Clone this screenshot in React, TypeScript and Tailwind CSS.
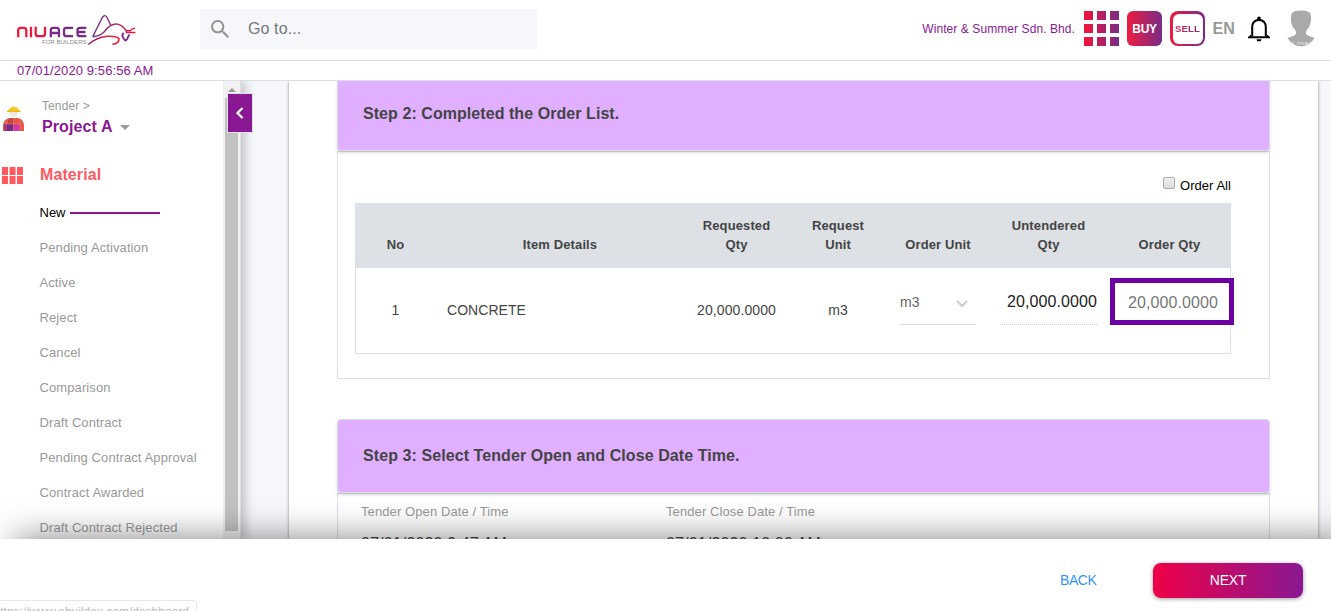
import type { ReactNode } from "react";

const menuItems = [
  "Pending Activation",
  "Active",
  "Reject",
  "Cancel",
  "Comparison",
  "Draft Contract",
  "Pending Contract Approval",
  "Contract Awarded",
  "Draft Contract Rejected",
];

function Logo() {
  return (
    <svg width="122" height="34" viewBox="0 0 122 34" fill="none" className="shrink-0">
      <defs>
        <linearGradient id="tail" x1="72" y1="0" x2="104" y2="0" gradientUnits="userSpaceOnUse">
          <stop stopColor="#7b2a8b" />
          <stop offset=".6" stopColor="#f01a3e" />
        </linearGradient>
        <linearGradient id="back" x1="77" y1="0" x2="120" y2="0" gradientUnits="userSpaceOnUse">
          <stop stopColor="#6d2c91" />
          <stop offset=".5" stopColor="#a82464" />
          <stop offset="1" stopColor="#f01a3e" />
        </linearGradient>
      </defs>
      <g strokeWidth="2.3">
        <path stroke="#ed1a3d" d="M2.200 24.300V17.300Q2.200 14.800 4.700 14.800H7.800Q10.300 14.800 10.300 17.300V24.300M15 13.700V24.300M19.700 13.700V20.700Q19.700 23.200 22.200 23.200H26.500Q29 23.200 29 20.700V13.700" />
        <path stroke="#7b2a8b" d="M34.800 24.300V17.300Q34.800 14.800 37.300 14.800H40.500Q43 14.800 43 17.300V24.300M34.800 20H43M57 14.800H50.500Q48 14.800 48 17.300V20.700Q48 23.200 50.500 23.200H57M70.300 14.800H64Q61.500 14.800 61.500 17.300V20.700Q61.500 23.200 64 23.200H70.300M61.500 19H69.500" />
      </g>
      <text x="26" y="31.300" fill="#8c8c8c" fontFamily="Liberation Sans" fontSize="6" textLength="44.500" lengthAdjust="spacingAndGlyphs">FOR BUILDERS</text>
      <path stroke="url(#back)" strokeWidth="1.400" strokeLinejoin="round" d="M76.700 23.700L86.300 4.500Q88.900 .8 91 4.500L95 12.700M76.700 23.700Q84.500 23 88.500 18.500Q94 11 100 11Q105.500 11 109.700 17.200L114 17.700Q116.500 15.300 119 15.300M110 17.500L110.500 19.500H119.500" />
      <path stroke="url(#tail)" strokeWidth="1.500" d="M72.300 31.500Q80 24.500 91 23.200Q101 22.800 103 25.500Q103.500 30.500 96.300 31.300" />
      <path stroke="#7b2a8b" strokeWidth="1.800" d="M107.500 19.800Q105.500 22 107 24.500L109.200 27.500Q111.500 27 111.700 24.500L113.500 21.500" />
    </svg>
  );
}

function Worker() {
  return (
    <svg width="22" height="26" viewBox="0 0 22 26">
      <circle cx="10.500" cy="6" r="4.800" fill="#eee8df" />
      <path fill="#f4c81f" d="M4 6L6 3Q8 1 10 1L10.500 0L11.500 1Q14 1 15.500 3L17.500 6Z" />
      <path fill="#e8b615" d="M4 4.800H17.500V6H4Z" />
      <path fill="#e65747" d="M0 25V19Q1 12 8 12H14Q20 12 21 19V25Z" />
      <path fill="#7b2a8b" d="M1.500 18H10.500V25H1.500Z" />
      <path fill="#cf3aa0" d="M10.500 18H17V25H10.500Z" />
      <path fill="#c9443f" d="M7 12H11V18H5V14Z" />
      <path stroke="#f08a72" strokeWidth=".5" d="M3 15V25M10.500 12V25M17 14V25M3 18H18" />
    </svg>
  );
}

function Avatar() {
  return (
    <svg width="32" height="37" viewBox="0 0 32 37">
      <defs>
        <clipPath id="avatarClip"><ellipse cx="16" cy="18" rx="16" ry="18.300" /></clipPath>
      </defs>
      <g clipPath="url(#avatarClip)">
        <path fill="#a9a9a9" d="M7 2.500Q9 .5 16 .5T25 2.500Q27 8 25.500 13Q25 17 22 19.500Q20.500 22 21 24Q24 27 32 28V37H0V28Q8 27 11 24Q11.500 22 10 19.500Q7 17 6.500 13Q5 8 7 2.500Z" />
        <text x="16" y="34.500" textAnchor="middle" fontFamily="Liberation Sans" fontSize="6" letterSpacing=".4" fill="#eee">No Image</text>
      </g>
    </svg>
  );
}

function StepHeader({ children, size }: { children: ReactNode; size: string }) {
  return (
    <div className={`relative box-border rounded-[4px] border border-[#dcdce4] bg-[#e0afff] pl-[25px] text-[16px] font-bold text-[#444] shadow-[0_2px_3px_rgba(0,0,0,0.15)] ${size}`}>
      {children}
    </div>
  );
}

export default function App() {
  return (
    <div className="flex h-[611px] w-[1331px] flex-col overflow-hidden bg-white font-['Liberation_Sans',Arial,sans-serif] text-[14px]">
      <header className="flex h-[61px] shrink-0 items-start border-b border-[#dcdfe5]">
        <div className="ml-[16px] mt-[13px]"><Logo /></div>
        <div className="ml-[62px] mt-[9px] flex h-[40px] w-[337px] items-center bg-[#f6f7fa]">
          <svg className="ml-[11px]" width="18" height="18" viewBox="3 3 17.500 17.500" fill="#929292"><path d="M15.500 14h-.79l-.28-.27A6.470 6.470 0 0 0 16 9.500 6.500 6.500 0 1 0 9.500 16c1.610 0 3.090-.59 4.230-1.570l.27.28v.79l5 4.990L20.490 19zm-6 0C7.010 14 5 11.990 5 9.500S7.010 5 9.500 5 14 7.010 14 9.500 11.990 14 9.500 14" /></svg>
          <span className="ml-[19px] text-[16px] tracking-[0.1px] text-[#777]">Go to...</span>
        </div>
        <div className="ml-auto flex h-[57px] items-center">
          <span className="mr-[9px] text-[12px] tracking-[0.08px] text-[#891892]">Winter &amp; Summer Sdn. Bhd.</span>
          <svg width="35" height="35" viewBox="0 0 35 35">
            <defs><linearGradient id="grid" x1="0" x2="35" y1="0" y2="0" gradientUnits="userSpaceOnUse"><stop stopColor="#f4143c" /><stop offset="1" stopColor="#782c86" /></linearGradient></defs>
            <path fill="url(#grid)" d="M0 0h9v9H0zM13 0h9v9h-9zM26 0h9v9h-9zM0 13h9v9H0zM13 13h9v9h-9zM26 13h9v9h-9zM0 26h9v9H0zM13 26h9v9h-9zM26 26h9v9h-9z" />
          </svg>
          <div className="ml-[8px] flex size-[35px] items-center justify-center rounded-[6px] bg-linear-to-r/srgb from-[#ee1c3f] to-[#782c86] text-[12px] font-bold tracking-[-0.3px] text-white">BUY</div>
          <div className="ml-[8px] size-[35px] rounded-[8px] bg-linear-to-r/srgb from-[#ee1c3f] to-[#782c86] p-[2.500px]">
            <div className="flex h-full items-center justify-center rounded-[6px] bg-white pt-[2px] text-[9.500px] font-bold tracking-[0.2px]">
              <span className="bg-linear-to-r/srgb from-[#d8204b] to-[#842a7e] bg-clip-text text-transparent">SELL</span>
            </div>
          </div>
          <span className="ml-[7.500px] w-[22.500px] text-[16px] font-bold text-[#999]">EN</span>
          <svg className="ml-[13px]" width="22" height="26" viewBox="0 0 22 26" fill="none">
            <path fill="#000" d="M9.200 2.200a1.800 1.800 0 0 1 3.600 0v1.800h-3.600z" />
            <path stroke="#000" strokeWidth="2" d="M4.200 20.500V11.500C4.200 6.500 7 4 11 4S17.800 6.500 17.800 11.500V20.500" />
            <path fill="#000" d="M0 22.200V21L3.200 18.500V20.200H18.800V18.500L22 21V22.200ZM8.500 23.300H13.500Q13.500 25.600 11 25.600T8.500 23.300Z" />
          </svg>
          <div className="ml-[15px] mr-[14px]"><Avatar /></div>
        </div>
      </header>

      <div className="h-[20px] shrink-0 border-b border-[#dcdfe5] pl-[17px] text-[13px] leading-[19px] tracking-[0.1px] text-[#891892]">07/01/2020 9:56:56 AM</div>

      <div className="flex h-[458px] shrink-0 overflow-hidden">
        <aside className="relative z-10 flex w-[241px] shrink-0 bg-white shadow-[4px_0_10px_rgba(0,0,0,0.22)]">
          <div className="flex w-[223px] flex-col">
            <div className="flex h-[76px] shrink-0 pt-[17px]">
              <div className="ml-[3px] mt-[8px] w-[39px]"><Worker /></div>
              <div>
                <div className="text-[12px] leading-[17px] tracking-[0.1px] text-[#999]">Tender &gt;</div>
                <div className="flex items-center text-[16px] font-bold leading-[24px] tracking-[0.1px] text-[#891892]">
                  Project A
                  <span className="ml-[7px] mt-[1px] border-x-[5px] border-t-[5px] border-x-transparent border-t-[#999]" />
                </div>
              </div>
            </div>
            <div className="-mt-[1px] flex h-[38px] shrink-0 items-center">
              <svg className="ml-[2px]" width="21" height="17" viewBox="0 0 21 17" fill="#ff5a5f"><path d="M0 0h6v8H0zM7.500 0h6v8h-6zM15 0h6v8h-6zM0 9h6v8H0zM7.500 9h6v8h-6zM15 9h6v8h-6z" /></svg>
              <span className="ml-[17px] text-[16px] font-bold tracking-[0.1px] text-[#ff5a5f]">Material</span>
            </div>
            <nav className="shrink-0 pl-[39.500px] pt-[2px] text-[13px] text-[#999]">
              <div className="flex h-[34px] items-center text-black"><span className="w-[30.500px]">New</span><span className="h-[2px] w-[90px] bg-[#891892]" /></div>
              {menuItems.map((item) => (
                <div key={item} className="flex h-[35px] items-center whitespace-nowrap tracking-[0.1px]">{item}</div>
              ))}
            </nav>
          </div>
          <div className="flex w-[17px] flex-col items-center bg-[#f1f1f1]">
            <span className="mt-[7px] border-x-[4px] border-b-[4px] border-x-transparent border-b-[#999]" />
            <div className="mt-[6px] h-[433px] w-[13px] shrink-0 bg-[#c1c1c1]" />
          </div>
          <div className="w-px bg-[#dcdfe5]" />
          <button className="absolute left-[227px] top-[12px] flex h-[40px] w-[26px] items-center justify-center border border-[#dcdfe5] bg-[#891892]">
            <svg className="mr-[2px]" width="9" height="12" viewBox="0 0 9 12" fill="none" stroke="#fff" strokeWidth="2.200"><path d="M7.500 1L2.500 6l5 5" /></svg>
          </button>
        </aside>

        <main className="flex min-w-0 flex-1 bg-[#f6f7fa] pl-[48px]">
          <div className="h-[458px] w-[1029px] bg-white px-[48px] shadow-[0_0_3px_rgba(0,0,0,0.45)]">
            <StepHeader size="-mt-[4px] h-[74px] w-[933px] pt-[24px] tracking-[0.06px]">Step 2: Completed the Order List.</StepHeader>
            <section className="h-[228px] w-[933px] border border-[#dcdfe5] pl-[17px]">
              <div className="mt-[23px] flex h-[28px] w-[876px] justify-end">
                <span className="mr-[5px] mt-[2px] size-[12px] rounded-[2px] border border-[#aaa] bg-linear-to-b from-[#eee] to-[#ddd]" />
                <span className="text-[13px] leading-[21px] tracking-[0.05px] text-black">Order All</span>
              </div>
              <div className="h-[151px] w-[876px] border border-[#dcdfe5] text-[#444]">
                <div className="-m-px grid h-[65px] w-[876px] grid-cols-[81px_248px_105px_98px_102px_118px_124px] items-end bg-[#dde1e6] pb-[14px] text-center text-[13px] font-bold leading-[19px] tracking-[0.12px]">
                  <span>No</span><span>Item Details</span><span>Requested<br />Qty</span><span>Request<br />Unit</span><span>Order Unit</span><span className="pl-px">Untendered<br />Qty</span><span className="pl-px">Order Qty</span>
                </div>
                <div className="-mx-px mt-px grid h-[84px] w-[876px] grid-cols-[81px_248px_105px_98px_102px_118px_124px] pt-[33px] text-center text-[14px] leading-[18px]">
                  <span>1</span>
                  <span className="pl-[11px] text-left tracking-[0.05px]">CONCRETE</span>
                  <span className="tracking-[0.1px]">20,000.0000</span>
                  <span>m3</span>
                  <div className="-mt-[9px] ml-[13px] flex h-[33px] w-[76px] items-start border-b border-[#ddd] pt-px text-[#666]">
                    <span>m3</span>
                    <svg className="ml-auto mr-[8px] mt-[7px]" width="12" height="8" viewBox="0 0 12 8" fill="none" stroke="#ccc" strokeWidth="2"><path d="M1 1l5 5 5-5" /></svg>
                  </div>
                  <div className="-mt-[9px] ml-[11px] h-[33px] w-[97px] border-b border-dotted border-[#ccc] pt-px text-right text-[16px] tracking-[0.1px] text-[#222]">20,000.0000</div>
                  <div className="-mt-[23px] ml-[3px] flex h-[47px] w-[124px] items-center justify-center border-[5px] border-[#6b00a3] pl-[2px] pt-[3px] text-[16px] tracking-[0.1px] text-[#777]">20,000.0000</div>
                </div>
              </div>
            </section>
            <StepHeader size="mt-[40px] h-[74px] w-[933px] pt-[24px] tracking-[0.08px]">Step 3: Select Tender Open and Close Date Time.</StepHeader>
            <section className="grid h-[200px] w-[933px] grid-cols-[305px_305px] border border-[#dcdfe5] pl-[23px] pt-[8px] text-[#444]">
              {[
                { title: "Tender Open Date / Time", value: "07/01/2020 9:47 AM" },
                { title: "Tender Close Date / Time", value: "07/01/2020 10:00 AM" },
              ].map((field) => (
                <div key={field.title}>
                  <div className="text-[13px] leading-[20px] tracking-[0.1px] text-[#999]">{field.title}</div>
                  <div className="mt-[13px] text-[16px] leading-[18px] tracking-[0.15px]">{field.value}</div>
                </div>
              ))}
            </section>
          </div>
        </main>
      </div>

      <footer className="relative z-20 flex h-[72px] shrink-0 items-start bg-white shadow-[15px_0_35px_rgba(0,0,0,0.5)]">
        <div className="mt-[61px] flex h-[24px] w-[197px] justify-end overflow-hidden whitespace-nowrap rounded-tr-[4px] border-r border-t border-[#e8e8e8] pr-[7px] pt-[4px] text-[12px] leading-[14px] text-[#bbb]">https://www.ebuildex.com/dashboard</div>
        <button className="ml-auto mr-[56.500px] mt-[31px] text-[14px] leading-[20px] tracking-[-0.4px] text-[#3395f3]">BACK</button>
        <button className="mr-[28px] mt-[24px] h-[35px] w-[150px] rounded-[8px] bg-linear-to-r/srgb from-[#ef0048] to-[#891892] text-[14px] tracking-[-0.2px] text-white shadow-[0_1px_4px_rgba(0,0,0,0.4)]">NEXT</button>
      </footer>
    </div>
  );
}
